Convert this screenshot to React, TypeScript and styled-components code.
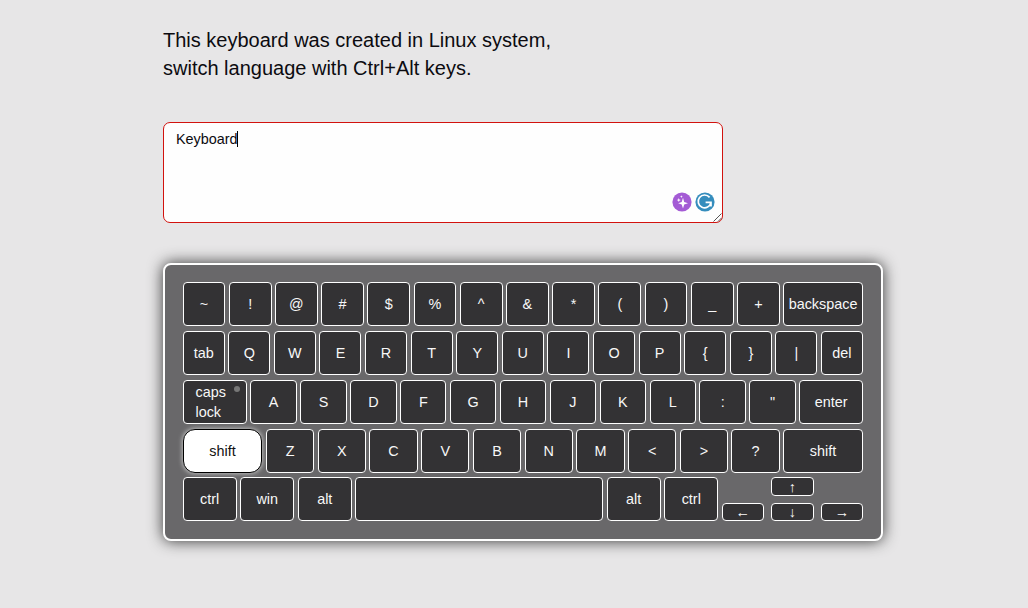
import React from "react";
import styled, { createGlobalStyle, css } from "styled-components";

const GlobalStyle = createGlobalStyle`
  *, *::before, *::after { box-sizing: border-box; }
  html, body { margin: 0; padding: 0; }
  body {
    min-height: 100vh;
    background: #e7e6e7;
    color: #0c0b10;
    font-family: "Liberation Sans", Arial, sans-serif;
    overflow: hidden;
  }
`;

const Page = styled.main`
  display: flex;
  flex-direction: column;
  width: 720px;
  margin-left: 163px;
  padding-top: 26px;
`;

const Title = styled.h1`
  margin: 0;
  font-size: 20px;
  font-weight: 400;
  line-height: 28px;
`;

const TextBox = styled.div`
  position: relative;
  display: flex;
  width: 560px;
  height: 101px;
  margin-top: 40px;
  padding: 8px 12px;
  border: 1px solid #d2120e;
  border-radius: 7px;
  background: #fefefe;
  font-size: 14.4px;
  line-height: 17px;
`;

const Caret = styled.span`
  width: 1px;
  height: 16px;
  margin-left: -0.5px;
  background: #000;
`;

const Assistants = styled.div`
  position: absolute;
  right: 7.5px;
  bottom: 10px;
  display: flex;
  gap: 3px;
`;

const ResizeHandle = styled.svg`
  position: absolute;
  right: 0;
  bottom: 0;
`;

const Board = styled.section`
  display: flex;
  flex-direction: column;
  gap: 4.75px;
  height: 278px;
  margin-top: 40px;
  padding: 17.45px 18.1px 0 17.65px;
  border: 2px solid #fff;
  border-radius: 8px;
  background: #69686a;
  box-shadow: 0 0 15px #333;
`;

const Row = styled.div`
  display: flex;
  gap: 3.56px;
  height: 44px;
  flex: none;
`;

const Key = styled.button<{ $width?: number; $active?: boolean }>`
  display: flex;
  align-items: center;
  justify-content: center;
  min-width: 0;
  height: 100%;
  padding: 0;
  border: 1px solid #fff;
  border-radius: 4px;
  background: #333234;
  color: #f8f8f8;
  font: 14.4px/20.16px "Liberation Sans", Arial, sans-serif;
  ${({ $width }) => ($width ? css`flex: 0 0 ${$width}px;` : css`flex: 1 1 0;`)}
  ${({ $active }) =>
    $active &&
    css`
      border-color: #000;
      border-radius: 12px;
      background: #fff;
      color: #111;
      box-shadow: 0 0 5px #ddd;
    `}
`;

const CapsKey = styled(Key)`
  position: relative;
  justify-content: flex-start;
  padding-left: 11.8px;
  text-align: left;
`;

const CapsLight = styled.span`
  position: absolute;
  top: 5px;
  right: 6px;
  width: 6px;
  height: 6px;
  border-radius: 50%;
  background: #777;
`;

const Arrows = styled.div`
  display: grid;
  flex: 0 0 141.1px;
  grid-template-columns: 42px 42.8px 42px;
  grid-template-rows: 19px 18px;
  justify-content: space-between;
  align-content: space-between;
  & > :first-child { grid-column: 2; }
  & > :nth-child(2) { grid-column: 1; }
`;

const symbols = ["~", "!", "@", "#", "$", "%", "^", "&", "*", "(", ")", "_", "+"];
const top = ["tab", ..."QWERTYUIOP{}|", "del"];
const home = [..."ASDFGHJKL:\""];
const bottom = [..."ZXCVBNM<>?"];

const letters = (keys: string[]) => keys.map((k) => <Key key={k}>{k}</Key>);

export default function App() {
  return (
    <>
      <GlobalStyle />
      <Page>
        <Title>
          This keyboard was created in Linux system,
          <br />
          switch language with Ctrl+Alt keys.
        </Title>
        <TextBox>
          <span>Keyboard</span>
          <Caret />
          <Assistants>
            <svg width="20" height="20" viewBox="0 0 20 20">
              <circle cx="10" cy="10" r="9.6" fill="#a45bd5" />
              <path d="M11 5.8 12.2 10 16 11.3 12.2 12.6 11 16.6 9.7 12.6 6.2 11.3 9.7 10Z" fill="#fff" />
              <path d="M6.8 6 7.3 7.5 8.8 8.1 7.3 8.7 6.8 10.1 6.2 8.7 4.8 8.1 6.2 7.5Z M9.4 3.2 9.8 4.3 10.8 4.7 9.8 5.1 9.4 6.1 9 5.1 8 4.7 9 4.3Z" fill="#fff" />
            </svg>
            <svg width="20" height="20" viewBox="0 0 20 20">
              <circle cx="10" cy="10" r="9.6" fill="#358dbd" />
              <path d="M14.6 5.4A6.4 6.4 0 1 0 15.9 10.6M10.6 10.4H16V14.4" fill="none" stroke="#fff" strokeWidth="1.7" />
            </svg>
          </Assistants>
          <ResizeHandle width="9" height="9" viewBox="0 0 9 9">
            <path d="M0.5 8.5 8.5 0.5M5 8.5 8.5 5" stroke="#555" strokeWidth="1" />
          </ResizeHandle>
        </TextBox>
        <Board>
          <Row>
            {letters(symbols)}
            <Key $width={79.55}>backspace</Key>
          </Row>
          <Row>{letters(top)}</Row>
          <Row>
            <CapsKey $width={64.25}>
              caps
              <br />
              lock
              <CapsLight />
            </CapsKey>
            {letters(home)}
            <Key $width={63.7}>enter</Key>
          </Row>
          <Row>
            <Key $width={79.84} $active>shift</Key>
            {letters(bottom)}
            <Key $width={79.65}>shift</Key>
          </Row>
          <Row>
            <Key $width={54}>ctrl</Key>
            <Key $width={54}>win</Key>
            <Key $width={54}>alt</Key>
            <Key aria-label="space" />
            <Key $width={54}>alt</Key>
            <Key $width={54}>ctrl</Key>
            <Arrows>
              <Key>↑</Key>
              <Key>←</Key>
              <Key>↓</Key>
              <Key>→</Key>
            </Arrows>
          </Row>
        </Board>
      </Page>
    </>
  );
}
